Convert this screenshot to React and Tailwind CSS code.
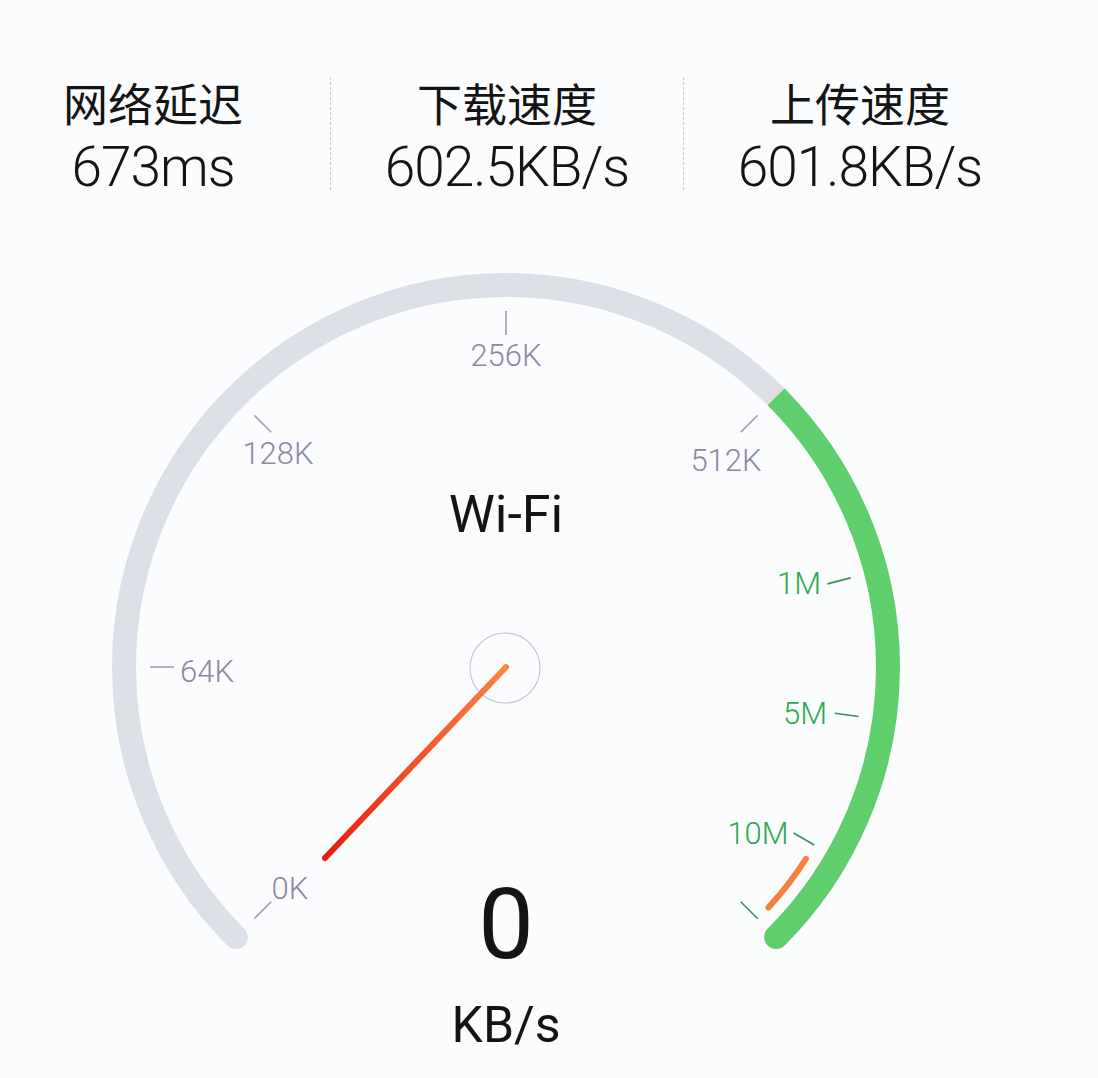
import React from "react";

const CX = 506;
const CY = 667;
const R = 382;

const pt = (deg, r) => {
  const a = (deg * Math.PI) / 180;
  return [CX + r * Math.cos(a), CY - r * Math.sin(a)];
};

const stats = [
  { title: "网络延迟", value: "673ms" },
  { title: "下载速度", value: "602.5KB/s" },
  { title: "上传速度", value: "601.8KB/s" },
];

// angle in degrees, label centre in page coords
const ticks = [
  { deg: 225, label: "0K", x: 290, y: 888, green: false },
  { deg: 180, label: "64K", x: 207, y: 671, green: false },
  { deg: 135, label: "128K", x: 278, y: 453, green: false },
  { deg: 90, label: "256K", x: 506, y: 355, green: false },
  { deg: 45, label: "512K", x: 726, y: 460, green: false },
  { deg: 14.5, label: "1M", x: 799, y: 583, green: true },
  { deg: -8, label: "5M", x: 805, y: 713, green: true },
  { deg: -30, label: "10M", x: 758, y: 833, green: true },
  { deg: -45, label: "", green: true },
];

function Gauge() {
  const [sx, sy] = pt(225, R);
  const [mx, my] = pt(45, R);
  const [ex, ey] = pt(-45, R);
  const [p1x, p1y] = pt(-32.6, 356);
  const [p2x, p2y] = pt(-42.5, 356);

  return (
    <svg
      className="absolute inset-0"
      width="1098"
      height="848"
      viewBox="0 230 1098 848"
    >
      <defs>
        <linearGradient
          id="needle"
          gradientUnits="userSpaceOnUse"
          x1={CX}
          y1={CY}
          x2="325"
          y2="858"
        >
          <stop offset="0" stopColor="#ff8444" />
          <stop offset="1" stopColor="#e41e10" />
        </linearGradient>
      </defs>

      {/* grey track */}
      <path
        d={`M ${sx} ${sy} A ${R} ${R} 0 1 1 ${mx} ${my}`}
        fill="none"
        stroke="#dcdfe5"
        strokeWidth="24"
        strokeLinecap="round"
      />
      {/* green part */}
      <path
        d={`M ${mx} ${my} A ${R} ${R} 0 0 1 ${ex} ${ey}`}
        fill="none"
        stroke="#5fcf6e"
        strokeWidth="24"
      />
      <circle cx={ex} cy={ey} r="12" fill="#5fcf6e" />

      {/* peak marker */}
      <path
        d={`M ${p1x} ${p1y} A 356 356 0 0 1 ${p2x} ${p2y}`}
        fill="none"
        stroke="#f7803f"
        strokeWidth="6"
        strokeLinecap="round"
      />

      {ticks.map((t) => {
        const [ax, ay] = pt(t.deg, 332);
        const [bx, by] = pt(t.deg, 356);
        return (
          <g key={t.deg}>
            <line
              x1={ax}
              y1={ay}
              x2={bx}
              y2={by}
              stroke={t.green ? "#3f8f57" : "#a19dad"}
              strokeWidth="1.6"
            />
            {t.label && (
              <text
                x={t.x}
                y={t.y}
                textAnchor="middle"
                dominantBaseline="central"
                fontSize="31"
                fontWeight="300"
                fontFamily="Roboto, 'Liberation Sans', sans-serif"
                fill={t.green ? "#2ea84c" : "#8d87a0"}
              >
                {t.label}
              </text>
            )}
          </g>
        );
      })}

      {/* hub + needle */}
      <circle cx={CX - 1} cy={CY + 1} r="35" fill="none" stroke="#c6c9d0" strokeWidth="1.2" />
      <line
        x1={CX}
        y1={CY}
        x2="325"
        y2="858"
        stroke="url(#needle)"
        strokeWidth="6"
        strokeLinecap="round"
      />
    </svg>
  );
}

export default function App() {
  return (
    <div className="w-[1098px] h-[1078px] bg-[#fbfcfe] overflow-hidden font-['Roboto','Noto_Sans_CJK_SC',sans-serif] text-[#141414]">
      {/* Stats row */}
      <div className="flex pt-[77px] h-[230px]">
        {stats.map((s, i) => (
          <div
            key={s.title}
            className={`flex flex-col items-center h-[113px] ${
              i === 0 ? "w-[330px] pr-[24px]" : "w-[353px] border-l border-dashed border-[#c9cbd0]"
            }`}
          >
            <div className="mt-[3px] text-[45px] leading-none font-['Noto_Sans_CJK_SC',sans-serif]">
              {s.title}
            </div>
            <div className="mt-[15px] text-[55px] leading-none font-light tracking-[-1px]">
              {s.value}
            </div>
          </div>
        ))}
      </div>

      {/* Gauge */}
      <div className="relative h-[848px]">
        <Gauge />
        <div className="relative w-[1012px] flex flex-col items-center">
          <div className="mt-[259px] text-[52px] leading-none">Wi-Fi</div>
          <div className="mt-[334px] text-[99px] leading-none">0</div>
          <div className="mt-[26px] text-[50px] leading-none">KB/s</div>
        </div>
      </div>
    </div>
  );
}
